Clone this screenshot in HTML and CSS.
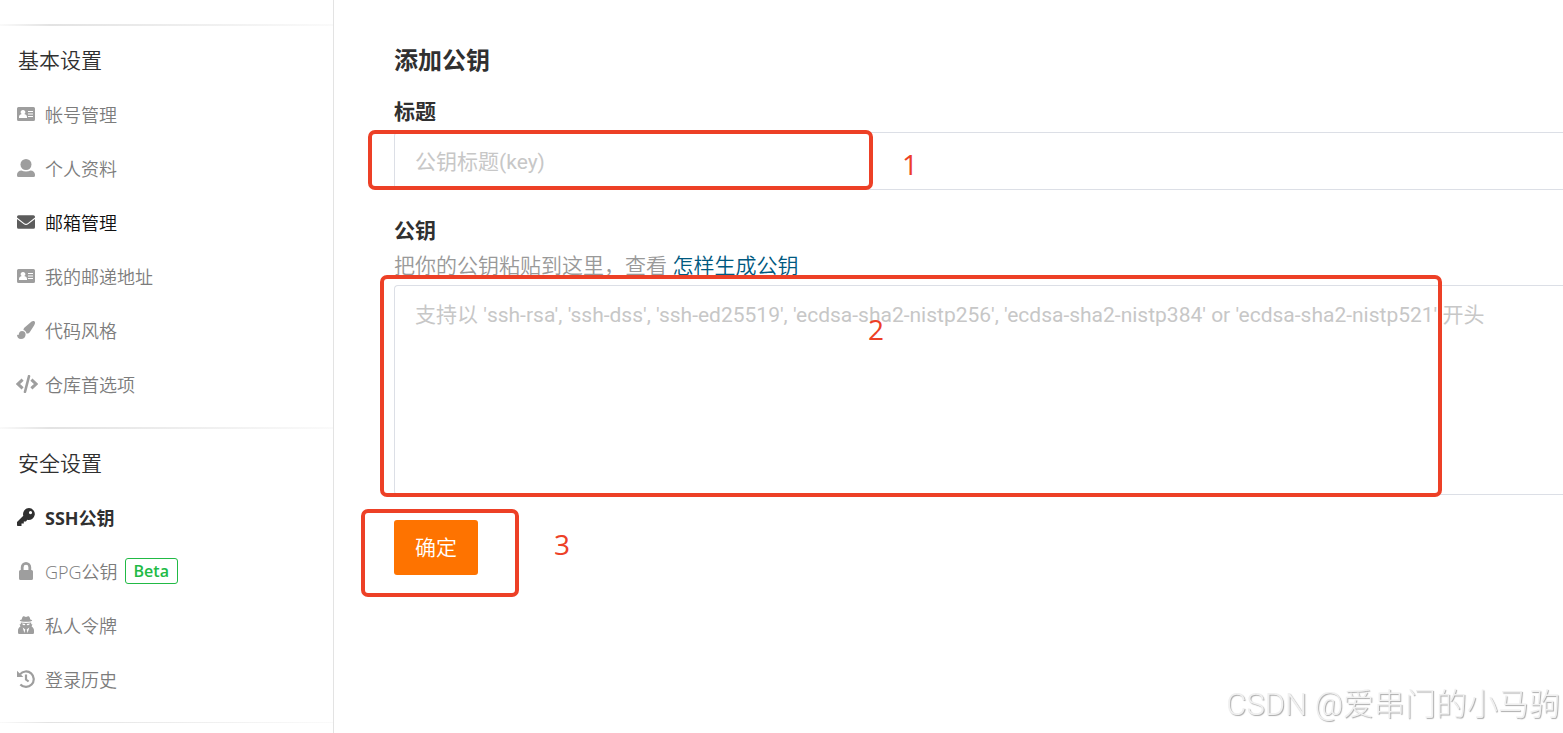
FILE: index.html
```html
<!DOCTYPE html>
<html lang="zh-CN">

<head>
    <meta charset="UTF-8">
    <meta name="viewport" content="width=device-width, initial-scale=1.0">
    <title>SSH公钥</title>
    <link rel="stylesheet" href="styles.css">
</head>

<body>
    <svg class="symbols" aria-hidden="true">
        <symbol id="icon-card" viewBox="0 0 18 18">
            <path fill-rule="evenodd" d="M1.500 2h15A1.500 1.500 0 0 1 18 3.500v11a1.500 1.500 0 0 1-1.500 1.500h-15A1.500 1.500 0 0 1 0 14.500v-11A1.500 1.500 0 0 1 1.500 2zM6 5a2.200 2.200 0 0 0-1.300 4.100C3 9.500 2 10.700 2 12v1h8v-1c0-1.300-1-2.500-2.700-2.900A2.200 2.200 0 0 0 6 5zM11 6v1h5V6zM11 8.500v1h5v-1zM11 11v1h5v-1z"/>
        </symbol>
        <symbol id="icon-user" viewBox="0 0 18 18">
            <circle cx="9" cy="5.500" r="5.500"/>
            <path d="M4.500 11.500c1.300.7 2.800 1 4.500 1s3.200-.3 4.500-1c2.500 0 4.500 2 4.500 4.200V16.500a1.500 1.500 0 0 1-1.500 1.500h-15A1.500 1.500 0 0 1 0 16.500v-.8c0-2.200 2-4.200 4.500-4.200z"/>
        </symbol>
        <symbol id="icon-mail" viewBox="0 0 18 18">
            <path d="M1.600 2.200h14.800A1.600 1.600 0 0 1 18 3.800v.8l-7.300 5.600q-1.700 1.300-3.400 0L0 4.600v-.8a1.600 1.600 0 0 1 1.600-1.600z"/>
            <path d="M0 6l6.600 5.100q2.400 1.800 4.800 0L18 6v8.200a1.600 1.600 0 0 1-1.600 1.600H1.600A1.600 1.600 0 0 1 0 14.200z"/>
        </symbol>
        <symbol id="icon-brush" viewBox="0 0 18 18">
            <path d="M14.600.6c1.600-1.300 4-.3 3.300 1.900-.2.800-.6 1.500-1 2.200l-4 6.200c-.8 1.200-2 1.700-3.400 1.500-.3-1.700-1.400-2.900-3-3.400 0-1.100.3-1.900 1.100-2.600z"/>
            <path d="M5 10c2.200 0 3.800 1.600 3.600 3.700-.2 2.800-2 4.300-4.600 4.300-2.700 0-4-2-4-4.600.6.400 1.100.7 1.500.5.500-.2.300-3.900 3.500-3.900z"/>
        </symbol>
        <symbol id="icon-code" viewBox="0 0 22 18">
            <path d="M6.600 4.600L2 9l4.600 4.400M15.400 4.600L20 9l-4.600 4.400" fill="none" stroke="currentColor" stroke-width="3"/>
            <path d="M13 1.200L9 16.800" fill="none" stroke="currentColor" stroke-width="2.600" stroke-linecap="round"/>
        </symbol>
        <symbol id="icon-key" viewBox="0 0 18 18">
            <path fill-rule="evenodd" d="M12 0a6 6 0 1 1-1.700 11.800l-1.400 1.600H6.800v2.200H4.500V18H.8a.8.800 0 0 1-.8-.8v-3.300l6.300-6.200A6 6 0 0 1 12 0zM13.500 3a1.600 1.600 0 1 0 0 3.200 1.600 1.600 0 0 0 0-3.200z"/>
        </symbol>
        <symbol id="icon-lock" viewBox="0 0 18 18">
            <path fill-rule="evenodd" d="M3.800 8V5.200a5.200 5.200 0 0 1 10.400 0V8h.3A1.500 1.500 0 0 1 16 9.500v7a1.500 1.500 0 0 1-1.500 1.500h-11A1.500 1.500 0 0 1 2 16.500v-7A1.500 1.500 0 0 1 3.500 8zM6.600 8h4.800V5.200a2.400 2.400 0 0 0-4.800 0z"/>
        </symbol>
        <symbol id="icon-secret" viewBox="0 0 18 18">
            <path d="M6.300.2C7 0 7.800.9 9 .9S11 0 11.700.2c.9.300 1.300 2 1.600 3.300 1.200.2 1.900.6 1.900 1 0 .8-2.800 1.300-6.200 1.300s-6.200-.5-6.200-1.300c0-.4.700-.8 1.900-1C5 2.200 5.400.5 6.300.2z"/>
            <path fill-rule="evenodd" d="M3.800 6.600c3 .5 7.400.5 10.400 0v1.600h1.200l-.8 2.300c1.500.8 2.400 2.300 2.400 4.100v2.200a1.200 1.200 0 0 1-1.200 1.200H2.200A1.200 1.200 0 0 1 1 16.800v-2.200c0-1.800.9-3.300 2.400-4.100l-.8-2.300h1.200zM5.200 7.600c.2 1.300.8 1.700 1.700 1.700.8 0 1.200-.5 1.500-1.400zM12.800 7.600c-.2 1.300-.8 1.700-1.700 1.700-.8 0-1.200-.5-1.500-1.400zM5.700 11.600L7.400 17l.9-3.500zM12.300 11.600L10.600 17l-.9-3.500z"/>
        </symbol>
        <symbol id="icon-history" viewBox="0 0 18 18">
            <path d="M3 4.400a7.700 7.700 0 1 1 .4 10M9 4.500v5l2.600 2" fill="none" stroke="currentColor" stroke-width="2.200"/>
            <path d="M0 .8v6.100h6.300z"/>
        </symbol>
    </svg>

    <div class="page">
        <aside class="sidebar">
            <nav class="menu">
                <h2>基本设置</h2>
                <a href="#"><svg class="icon"><use href="#icon-card"/></svg>帐号管理</a>
                <a href="#"><svg class="icon"><use href="#icon-user"/></svg>个人资料</a>
                <a href="#" class="hover"><svg class="icon"><use href="#icon-mail"/></svg>邮箱管理</a>
                <a href="#"><svg class="icon"><use href="#icon-card"/></svg>我的邮递地址</a>
                <a href="#"><svg class="icon"><use href="#icon-brush"/></svg>代码风格</a>
                <a href="#"><svg class="icon icon-wide"><use href="#icon-code"/></svg>仓库首选项</a>
            </nav>
            <nav class="menu">
                <h2>安全设置</h2>
                <a href="#" class="active"><svg class="icon"><use href="#icon-key"/></svg>SSH公钥</a>
                <a href="#"><svg class="icon"><use href="#icon-lock"/></svg>GPG公钥<span class="beta">Beta</span></a>
                <a href="#"><svg class="icon"><use href="#icon-secret"/></svg>私人令牌</a>
                <a href="#"><svg class="icon"><use href="#icon-history"/></svg>登录历史</a>
            </nav>
            <hr class="menu-end">
        </aside>

        <main class="content">
            <h1>添加公钥</h1>
            <form>
                <label for="key-title">标题</label>
                <div class="field">
                    <input type="text" id="key-title" placeholder="公钥标题(key)">
                    <div class="mark mark-title"><span>1</span></div>
                </div>

                <label for="key-body">公钥</label>
                <p class="help">把你的公钥粘贴到这里，查看 <a href="#">怎样生成公钥</a></p>
                <div class="field">
                    <textarea id="key-body" placeholder="支持以 'ssh-rsa', 'ssh-dss', 'ssh-ed25519', 'ecdsa-sha2-nistp256', 'ecdsa-sha2-nistp384' or 'ecdsa-sha2-nistp521' 开头"></textarea>
                    <div class="mark mark-body"><span>2</span></div>
                </div>

                <div class="field submit">
                    <button type="submit">确定</button>
                    <div class="mark mark-submit"><span>3</span></div>
                </div>
            </form>
        </main>
    </div>

    <div class="watermark">CSDN @爱串门的小马驹</div>
</body>

</html>
```
FILE: styles.css
```css
* {
    box-sizing: border-box;
}

body {
    margin: 0;
    background: #fff;
    color: #303030;
    font-family: "Open Sans", "Noto Sans CJK SC", sans-serif;
    font-size: 21px;
    overflow: hidden;
}

.symbols {
    display: none;
}

.page {
    display: flex;
    min-height: 100vh;
}

/* sidebar */
.sidebar {
    flex: 0 0 334px;
    padding-top: 24px;
    border-right: 1px solid #e3e3e3;
}

.menu {
    padding-bottom: 16px;
}

.menu::before,
.menu-end {
    content: "";
    display: block;
    height: 2px;
    margin: 0 0 7px;
    border: 0;
    background: linear-gradient(to right, #fafafa, #e3e3e3 15%, #fafafa);
}

.menu-end {
    height: 1px;
}

.menu h2 {
    margin: 0;
    padding-left: 18px;
    font-size: 21px;
    font-weight: 350;
    line-height: 54px;
}

.menu a {
    display: flex;
    align-items: center;
    height: 54px;
    padding-left: 17px;
    color: #7c7c7c;
    font-size: 18px;
    font-weight: 350;
    text-decoration: none;
}

.icon {
    width: 18px;
    height: 18px;
    margin-right: 10px;
    fill: currentColor;
    color: #9e9e9e;
}

.icon-wide {
    width: 22px;
    margin-left: -1px;
    margin-right: 7px;
}

.menu .hover {
    color: #111;
}

.hover .icon {
    color: #5c5c5c;
}

.menu .active {
    color: #303030;
    font-weight: 700;
}

.active .icon {
    color: #303030;
}

.beta {
    margin-left: 7px;
    padding: 0 8px;
    border: 1px solid #21ba45;
    border-radius: 3px;
    color: #21ba45;
    font-size: 16px;
    font-weight: 600;
    line-height: 24px;
}

/* form */
.content {
    flex: 1;
    min-width: 0;
    padding: 39px 0 0 60px;
}

h1 {
    margin: 0 0 12px;
    font-size: 24px;
    line-height: 42px;
}

label {
    display: block;
    font-weight: 700;
    line-height: 36px;
}

.field {
    position: relative;
    padding-top: 3px;
}

input,
textarea {
    display: block;
    width: 100%;
    padding: 2px 20px 0;
    border: 1px solid #dcdfe6;
    border-right: 0;
    border-radius: 4px 0 0 4px;
    background: #fff;
    color: #303030;
    font: 400 21px Roboto, "Noto Sans CJK SC", sans-serif;
    outline: none;
}

input {
    height: 58px;
    margin-bottom: 22px;
}

textarea {
    height: 210px;
    padding-top: 14px;
    line-height: 30px;
    resize: none;
}

::placeholder {
    color: #c7c7c7;
    opacity: 1;
}

.help {
    margin: 0;
    color: #999;
    font-weight: 350;
    line-height: 34px;
}

.help a {
    color: #005980;
    text-decoration: none;
}

.submit {
    margin-top: 22px;
}

button {
    height: 55px;
    padding: 0 21px 3px;
    border: 0;
    border-radius: 3px;
    background: #fe7300;
    color: #fff;
    font: 350 21px "Open Sans", "Noto Sans CJK SC", sans-serif;
    cursor: pointer;
}

/* numbered red frames over the fields */
.mark {
    position: absolute;
    border: 4px solid #ed4026;
    border-radius: 7px;
    pointer-events: none;
}

.mark span {
    position: absolute;
    color: #ed4026;
    font-size: 28px;
    line-height: 28px;
}

.mark-title {
    top: 1px;
    left: -26px;
    width: 505px;
    height: 60px;
}

.mark-title span {
    top: 16px;
    left: 530px;
}

.mark-body {
    top: -7px;
    left: -14px;
    width: 1062px;
    height: 222px;
}

.mark-body span {
    top: 36px;
    left: 484px;
}

.mark-submit {
    top: -8px;
    left: -33px;
    width: 158px;
    height: 88px;
}

.mark-submit span {
    top: 17px;
    left: 189px;
}

.watermark {
    position: fixed;
    right: 3px;
    bottom: 5px;
    color: #f0f0f0;
    font: 300 31px/46px Roboto, "Noto Sans CJK SC", sans-serif;
    text-shadow: 1px 1px 1px #aaa;
}
```
